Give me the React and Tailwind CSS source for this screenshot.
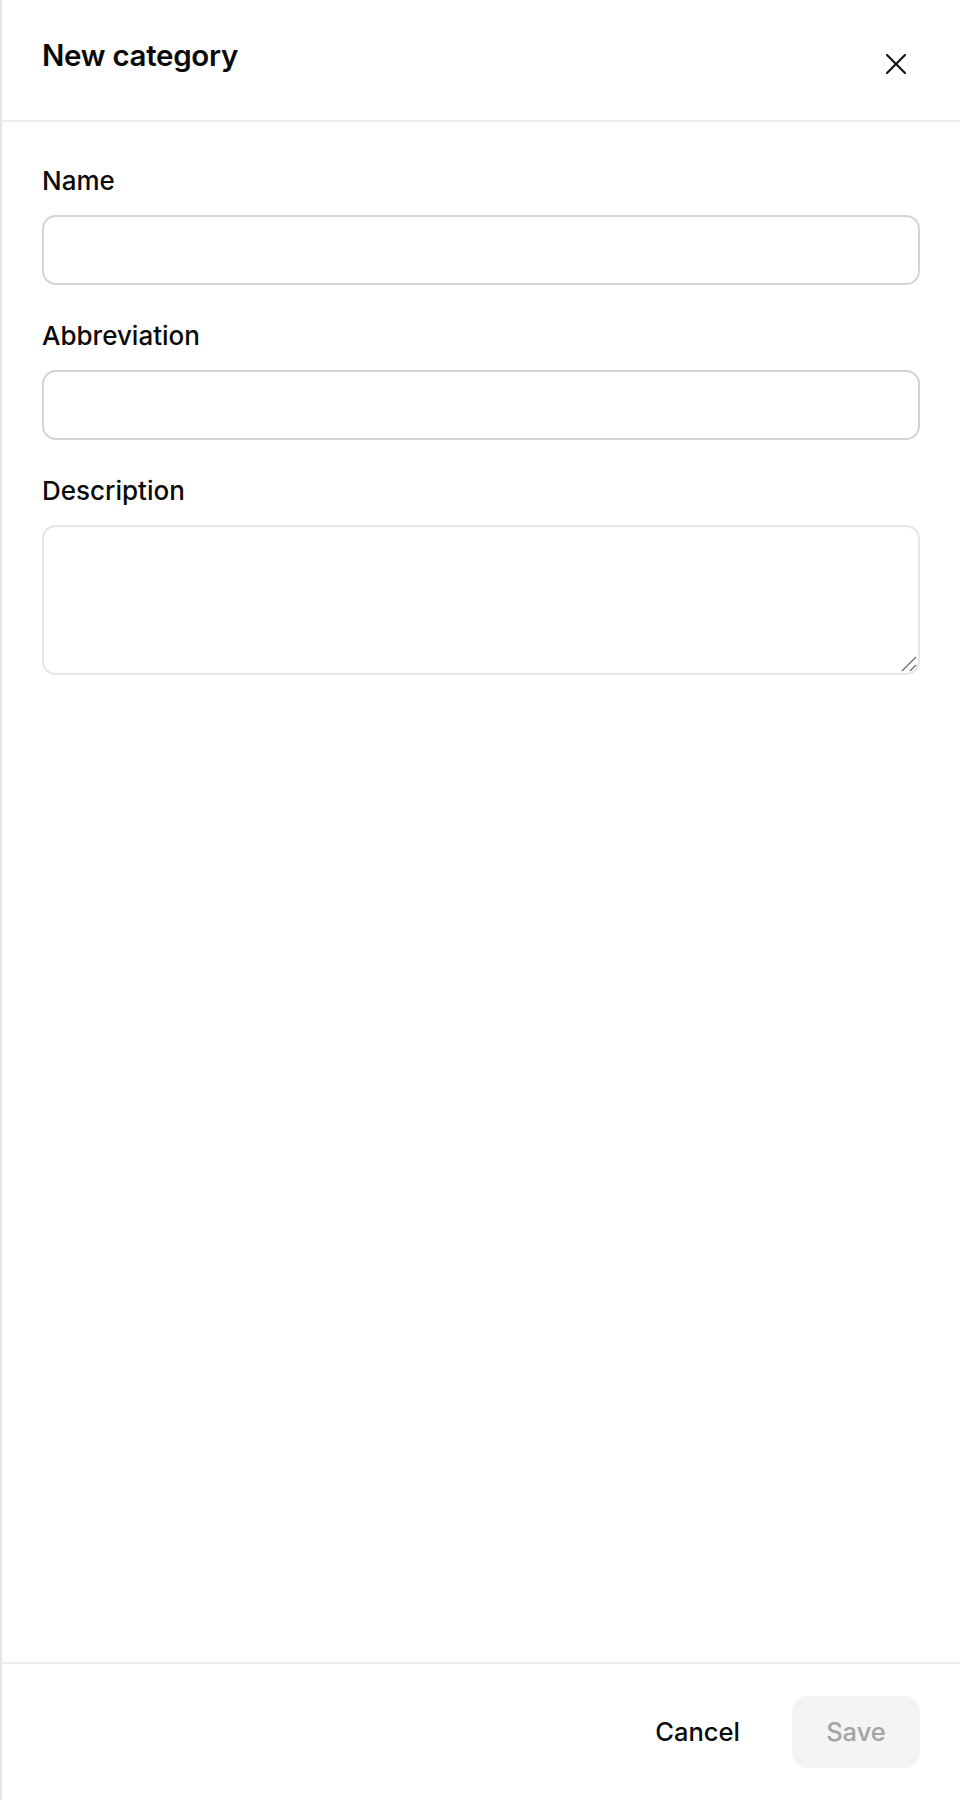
import { X } from "lucide-react";

const Field = ({ label, children }) => {
  return (
    <div className="flex flex-col">
      <label className="text-[26px] leading-[30px] font-[450] text-[#0a0a0a] mb-[19px]">{label}</label>
      {children}
    </div>
  );
};

const App = () => {
  return (
    <div className="w-[960px] h-[1800px] flex flex-col bg-white border-l-2 border-[#e6e6e6] font-['Inter','Liberation_Sans',sans-serif] text-[#0a0a0a]">
      <div className="h-[122px] shrink-0 flex items-start justify-between pl-[40px] pr-[46px] border-b-2 border-[#ededed]">
        <h2 className="mt-[37px] text-[29.5px] leading-[36px] font-semibold tracking-[-0.01em]">New category</h2>
        <button className="mt-[46px] text-[#111]">
          <X size={36} strokeWidth={1.4} />
        </button>
      </div>

      <div className="flex-1 flex flex-col gap-[36px] px-[40px] pt-[44px]">
        <Field label="Name">
          <input className="h-[70px] w-full rounded-[14px] border-2 border-[#d4d4d4] bg-white px-4 text-[24px] outline-none" />
        </Field>
        <Field label="Abbreviation">
          <input className="h-[70px] w-full rounded-[14px] border-2 border-[#d4d4d4] bg-white px-4 text-[24px] outline-none" />
        </Field>
        <Field label="Description">
          <div className="relative">
            <textarea className="block h-[150px] w-full resize-none rounded-[14px] border-2 border-[#e5e5e5] bg-white px-4 py-3 text-[24px] outline-none" />
            {/* resize grip */}
            <svg className="absolute right-[3px] bottom-[3px] pointer-events-none" width="16" height="16" viewBox="0 0 16 16">
              <line x1="1" y1="15" x2="15" y2="1" stroke="#6b6b6b" strokeWidth="1.3" />
              <line x1="9" y1="15" x2="15" y2="9" stroke="#6b6b6b" strokeWidth="1.3" />
            </svg>
          </div>
        </Field>
      </div>

      <div className="h-[138px] shrink-0 flex items-center justify-end gap-[52px] pr-[40px] border-t-2 border-[#ededed] bg-white">
        <button className="text-[25.5px] font-medium text-[#0a0a0a]">Cancel</button>
        <button className="h-[72px] w-[128px] rounded-[16px] bg-[#f4f4f4] text-[25.5px] font-medium text-[#a3a3a3]">Save</button>
      </div>
    </div>
  );
};

export default App;
